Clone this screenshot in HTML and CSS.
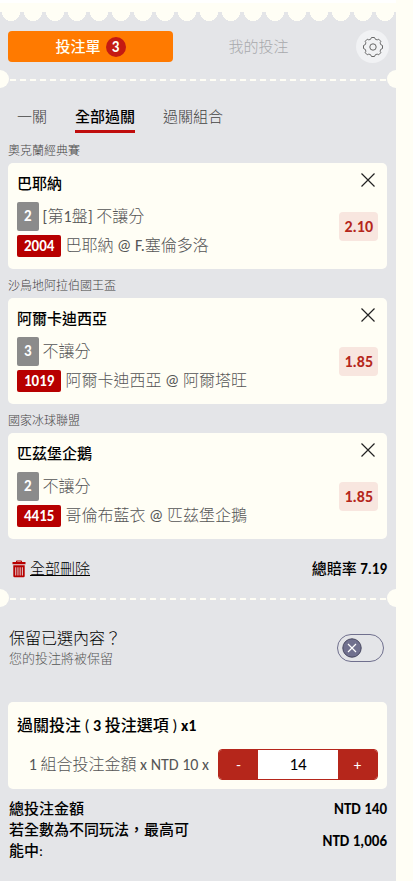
FILE: index.html
```html
<!DOCTYPE html>
<html lang="zh-Hant">
<head>
<meta charset="utf-8">
<meta name="viewport" content="width=device-width, initial-scale=1">
<title>投注單</title>
<link rel="stylesheet" href="styles.css">
</head>
<body>
<main class="slip">
  <div class="scallops"></div>

  <header class="topbar">
    <button class="tab tab-active" type="button">投注單 <span class="count">3</span></button>
    <button class="tab" type="button">我的投注</button>
    <button class="settings" type="button" aria-label="設定">
      <svg viewBox="0 0 24 24" width="24" height="24" fill="none" stroke="currentColor" stroke-linejoin="round">
        <path d="M21.5 10.5V13.5A2.6 2.6 0 0 0 19.8 17.7L17.7 19.8A2.6 2.6 0 0 0 13.5 21.5H10.5A2.6 2.6 0 0 0 6.3 19.8L4.2 17.7A2.6 2.6 0 0 0 2.5 13.5V10.5A2.6 2.6 0 0 0 4.2 6.3L6.3 4.2A2.6 2.6 0 0 0 10.5 2.5H13.5A2.6 2.6 0 0 0 17.7 4.2L19.8 6.3A2.6 2.6 0 0 0 21.5 10.5Z"/>
        <circle cx="12" cy="12" r="3.2"/>
      </svg>
    </button>
  </header>

  <div class="tear"></div>

  <nav class="modes">
    <a class="mode" href="#single">一關</a>
    <a class="mode mode-active" href="#all">全部過關</a>
    <a class="mode" href="#combo">過關組合</a>
  </nav>

  <section class="bet">
    <h2 class="league">奧克蘭經典賽</h2>
    <article class="card">
      <div class="info">
        <h3 class="pick">巴耶納</h3>
        <p class="line"><span class="badge badge-type">2</span>[第1盤] 不讓分</p>
        <p class="line"><span class="badge badge-id">2004</span>巴耶納 @ F.塞倫多洛</p>
      </div>
      <div class="side">
        <button class="remove" type="button" aria-label="移除"><svg viewBox="0 0 14 14" width="14" height="14"><path d="M.5 .5 13.5 13.5M13.5 .5 .5 13.5"/></svg></button>
        <span class="odds">2.10</span>
      </div>
    </article>
  </section>

  <section class="bet">
    <h2 class="league">沙烏地阿拉伯國王盃</h2>
    <article class="card">
      <div class="info">
        <h3 class="pick">阿爾卡迪西亞</h3>
        <p class="line"><span class="badge badge-type">3</span>不讓分</p>
        <p class="line"><span class="badge badge-id">1019</span>阿爾卡迪西亞 @ 阿爾塔旺</p>
      </div>
      <div class="side">
        <button class="remove" type="button" aria-label="移除"><svg viewBox="0 0 14 14" width="14" height="14"><path d="M.5 .5 13.5 13.5M13.5 .5 .5 13.5"/></svg></button>
        <span class="odds">1.85</span>
      </div>
    </article>
  </section>

  <section class="bet">
    <h2 class="league">國家冰球聯盟</h2>
    <article class="card">
      <div class="info">
        <h3 class="pick">匹茲堡企鵝</h3>
        <p class="line"><span class="badge badge-type">2</span>不讓分</p>
        <p class="line"><span class="badge badge-id">4415</span>哥倫布藍衣 @ 匹茲堡企鵝</p>
      </div>
      <div class="side">
        <button class="remove" type="button" aria-label="移除"><svg viewBox="0 0 14 14" width="14" height="14"><path d="M.5 .5 13.5 13.5M13.5 .5 .5 13.5"/></svg></button>
        <span class="odds">1.85</span>
      </div>
    </article>
  </section>

  <div class="summary">
    <button class="clear" type="button">
      <svg viewBox="0 0 14 18" width="14" height="18" fill="currentColor">
        <path fill-rule="evenodd" d="M4 2V1.4Q4 .5 5 .5H9Q10 .5 10 1.4V2H13.5V4.3H.5V2ZM5.2 2H8.8V1.5H5.2ZM1.3 5.3H12.7V16Q12.7 17.3 11.4 17.3H2.6Q1.3 17.3 1.3 16ZM3.3 7.3V15.5H4.2V7.3ZM5.5 7.3V15.5H6.4V7.3ZM7.7 7.3V15.5H8.6V7.3ZM9.9 7.3V15.5H10.8V7.3Z"/>
      </svg>
      <span class="clear-text">全部刪除</span>
    </button>
    <strong class="total-odds">總賠率 <span class="figure">7.19</span></strong>
  </div>

  <div class="tear"></div>

  <div class="keep">
    <label class="keep-label" for="keep">保留已選內容？<small class="keep-note">您的投注將被保留</small></label>
    <span class="switch">
      <input class="switch-input" id="keep" type="checkbox">
      <svg class="knob" viewBox="0 0 20 20" width="20" height="20"><circle cx="10" cy="10" r="9.2"/><path d="M6 6 14 14M14 6 6 14"/></svg>
    </span>
  </div>

  <section class="stake">
    <h3 class="stake-title">過關投注 ( <span class="figure">3</span> 投注選項 ) <span class="figure">x1</span></h3>
    <div class="stake-row">
      <label class="stake-label" for="amount">1 組合投注金額 x NTD 10 x</label>
      <div class="stepper">
        <button class="step" type="button">-</button>
        <input class="amount" id="amount" type="text" inputmode="numeric" value="14">
        <button class="step" type="button">+</button>
      </div>
    </div>
  </section>

  <dl class="totals">
    <div class="total"><dt>總投注金額</dt><dd class="figure">NTD 140</dd></div>
    <div class="total"><dt>若全數為不同玩法，最高可能中:</dt><dd class="figure">NTD 1,006</dd></div>
  </dl>
</main>
</body>
</html>
```
FILE: styles.css
```css
:root {
  --cream: #fffef5;
  --grey: #e4e5e8;
  --red: #b70000;
  --brick: #b5261b;
}

* { box-sizing: border-box; }

body, h2, h3, p, dl, dd { margin: 0; }

body {
  min-height: 100vh;
  padding-right: 17px;
  background: var(--cream);
  color: #000;
  font: 15px/22px Carlito, Lato, "Noto Sans CJK TC", sans-serif;
}

button, input { font: inherit; }
button { padding: 0; border: 0; background: none; color: inherit; }

.slip {
  min-height: 100vh;
  overflow: hidden;
  background: var(--grey);
}

.scallops {
  height: 22px;
  border-top: 3px solid #fff;
  background:
    linear-gradient(var(--cream), var(--cream)) 0 0 / 100% 9px no-repeat,
    radial-gradient(circle at 11px 9px, var(--cream) 9px, transparent 9px) 0 0 / 22px 100% repeat-x;
}

.topbar {
  display: flex;
  align-items: center;
  gap: 3px;
  padding: 8px 7px 7px 8px;
}

.tab {
  display: flex;
  flex: 1;
  align-items: center;
  justify-content: center;
  gap: 5px;
  height: 31px;
  border-radius: 4px;
  color: #a8a9ac;
  font-weight: 300;
}

.tab-active {
  background: #ff7a00;
  color: var(--cream);
  font-weight: 500;
}

.count {
  width: 20px;
  height: 20px;
  border-radius: 50%;
  background: #c41a12;
  font-weight: 700;
  line-height: 20px;
}

.settings {
  display: grid;
  place-items: center;
  width: 33px;
  height: 33px;
  margin-left: 12px;
  border-radius: 50%;
  background: #f1f2f4;
  color: #666;
}

.tear {
  display: flex;
  align-items: center;
  justify-content: space-between;
  height: 18px;
  margin: 0 -9px;
  background: repeating-linear-gradient(90deg, var(--cream) 0 6px, transparent 6px 10px) 19px 9px / calc(100% - 38px) 2px no-repeat;
}

.tear::before, .tear::after {
  width: 18px;
  height: 18px;
  border-radius: 50%;
  background: var(--cream);
  content: "";
}

.modes {
  display: flex;
  gap: 28px;
  padding: 18px 17px 1px;
}

.mode {
  padding-bottom: 2px;
  border-bottom: 3px solid transparent;
  color: #444;
  text-decoration: none;
  font-weight: 300;
}

.mode-active {
  border-color: #c00d0d;
  color: #000;
  font-weight: 500;
}

.bet { padding: 8px 9px 0 8px; }

.league {
  margin-bottom: 3px;
  color: #444;
  font-size: 12px;
  font-weight: 300;
  line-height: 18px;
}

.card {
  display: flex;
  justify-content: space-between;
  padding: 10px 9px 12px;
  border-radius: 5px;
  background: var(--cream);
}

.pick {
  margin-bottom: 7px;
  font-size: 15px;
  font-weight: 500;
}

.line {
  display: flex;
  align-items: center;
  gap: 4px;
  color: #555;
  font-size: 16px;
  font-weight: 300;
}

.line + .line { margin-top: 4px; }

.badge {
  padding: 0 7px;
  border-radius: 2px;
  color: #fff;
  font-size: 15px;
  font-weight: 700;
}

.badge-type { background: #8b8b8b; line-height: 29px; }
.badge-id { background: var(--red); line-height: 22px; }

.side {
  display: flex;
  flex-direction: column;
  align-items: flex-end;
  gap: 25px;
}

.remove {
  display: flex;
  margin-right: 3px;
}

.remove path { stroke: #222; stroke-width: 1.2; }

.odds {
  padding: 0 5px;
  border-radius: 4px;
  background: #f8e6df;
  color: var(--brick);
  font-size: 16px;
  font-weight: 700;
  line-height: 29px;
}

.summary {
  display: flex;
  align-items: center;
  justify-content: space-between;
  padding: 19px 9px 9px 12px;
}

.clear {
  display: flex;
  align-items: center;
  gap: 4px;
  color: var(--red);
}

.clear-text {
  color: #000;
  font-weight: 300;
  text-decoration: underline;
}

.total-odds { font-weight: 500; }

.figure { font-weight: 700; }

.keep {
  display: flex;
  align-items: center;
  justify-content: space-between;
  padding: 21px 12px 34px 9px;
}

.keep-label {
  font-size: 16px;
  font-weight: 300;
}

.keep-note {
  display: block;
  color: #555;
  font-size: 13px;
  line-height: 18px;
}

.switch { position: relative; display: flex; }

.switch-input {
  width: 47px;
  height: 28px;
  margin: 0;
  border: 1px solid #70708e;
  border-radius: 14px;
  appearance: none;
}

.knob {
  position: absolute;
  top: 4px;
  left: 5px;
  pointer-events: none;
}

.knob circle { fill: #70708e; stroke: #46465f; }
.knob path { stroke: #fff; stroke-width: 1.2; }

.stake {
  margin: 0 9px 0 8px;
  padding: 13px 9px 9px;
  border-radius: 5px;
  background: var(--cream);
}

.stake-title { font-size: 16px; font-weight: 500; }

.stake-row {
  display: flex;
  align-items: center;
  justify-content: flex-end;
  gap: 9px;
  margin-top: 12px;
}

.stake-label {
  color: #555;
  font-size: 16px;
  font-weight: 300;
}

.stepper {
  display: flex;
  width: 160px;
  height: 31px;
  overflow: hidden;
  border: 1px solid var(--brick);
  border-radius: 4px;
}

.step {
  width: 39px;
  background: var(--brick);
  color: #fff;
}

.amount {
  flex: 1;
  min-width: 0;
  padding: 0;
  border: 0;
  background: #fff;
  font-size: 17px;
  text-align: center;
}

.totals { padding: 10px 9px; }

.total {
  display: flex;
  align-items: center;
  justify-content: space-between;
  font-weight: 500;
  line-height: 21px;
}

.total dt { width: 50%; }
```
